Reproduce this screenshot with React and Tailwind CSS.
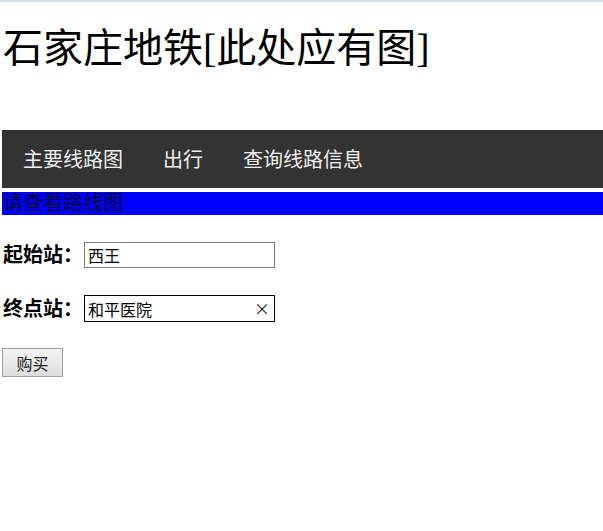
export default function App() {
  return (
    <div className="w-[603px] h-[531px] bg-white overflow-hidden flex flex-col">
      <div className="h-[2px] bg-[#d3dcee]" />
      <h1 className="mt-[24px] pl-[3px] text-[40px] leading-[46px] text-black whitespace-nowrap font-['Liberation_Serif','Noto_Sans_CJK_SC',serif]">
        石家庄地铁[此处应有图]
      </h1>
      <nav className="mt-[58px] ml-[2px] h-[58px] bg-[#333333] flex items-center pl-[1px] font-['Noto_Sans_CJK_SC','Liberation_Sans',sans-serif]">
        <a className="px-5 text-[20px] leading-[26px] text-[#f0f0f0]">主要线路图</a>
        <a className="px-5 text-[20px] leading-[26px] text-[#f0f0f0]">出行</a>
        <a className="px-5 text-[20px] leading-[26px] text-[#f0f0f0]">查询线路信息</a>
      </nav>
      <div className="mt-[4px] ml-[2px] h-[23px] bg-[#0000ff] text-[20px] leading-[23px] text-[#000033] pl-[1px] overflow-hidden font-['Liberation_Serif','Noto_Sans_CJK_SC',serif]">
        请查看路线图
      </div>
      <div className="mt-[27px] pl-[3px] flex items-center h-[26px]">
        <span className="w-[81px] text-[20px] font-bold text-black font-['Liberation_Serif','Noto_Sans_CJK_SC',serif]">起始站：</span>
        <div className="w-[191px] h-[26px] border border-[#7a7a7a] flex items-center pl-[3px] text-[16px] text-black font-['Noto_Sans_CJK_SC','Liberation_Sans',sans-serif]">
          西王
        </div>
      </div>
      <div className="mt-[27px] pl-[3px] flex items-center h-[27px]">
        <span className="w-[81px] text-[20px] font-bold text-black font-['Liberation_Serif','Noto_Sans_CJK_SC',serif]">终点站：</span>
        <div className="relative w-[191px] h-[27px] border border-black flex items-center pl-[3px] text-[16px] text-black font-['Noto_Sans_CJK_SC','Liberation_Sans',sans-serif]">
          和平医院
          <span className="absolute right-[4px] top-[3px] text-[16px] leading-[18px] text-[#222]">×</span>
        </div>
      </div>
      <div className="mt-[26px] pl-[2px]">
        <button className="w-[61px] h-[29px] border border-[#a0a0a0] bg-gradient-to-b from-[#f4f4f4] to-[#dedede] text-[16px] text-[#222] flex items-center justify-center font-['Noto_Sans_CJK_SC','Liberation_Sans',sans-serif]">
          购买
        </button>
      </div>
    </div>
  );
}
